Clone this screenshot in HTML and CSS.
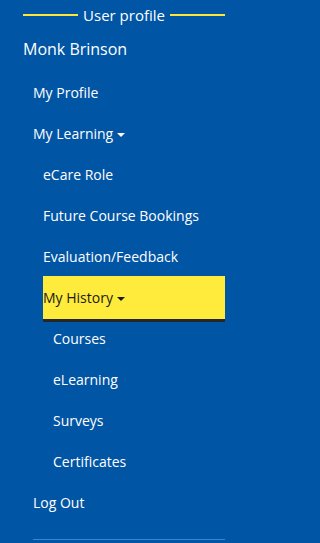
FILE: index.html
```html
<!DOCTYPE html>
<html lang="en">
<head>
<meta charset="utf-8">
<title>User profile</title>
<link rel="stylesheet" href="styles.css">
</head>
<body>
<nav class="sidebar">
  <div class="heading"><span class="rule"></span><span class="heading-text">User profile</span><span class="rule"></span></div>
  <div class="name">Monk Brinson</div>
  <ul class="menu">
    <li><a class="link">My Profile</a></li>
    <li><a class="link">My Learning<span class="caret"></span></a>
      <ul class="menu sub">
        <li><a class="link">eCare Role</a></li>
        <li><a class="link">Future Course Bookings</a></li>
        <li><a class="link">Evaluation/Feedback</a></li>
        <li><a class="link active">My History<span class="caret"></span></a>
          <ul class="menu sub">
            <li><a class="link">Courses</a></li>
            <li><a class="link">eLearning</a></li>
            <li><a class="link">Surveys</a></li>
            <li><a class="link">Certificates</a></li>
          </ul>
        </li>
      </ul>
    </li>
    <li><a class="link">Log Out</a></li>
  </ul>
  <div class="divider"></div>
</nav>
</body>
</html>
```
FILE: styles.css
```css
html, body {
  margin: 0;
  padding: 0;
  background: #0155a5;
  height: 100%;
  overflow: hidden;
}
body {
  font-family: "Open Sans", "Noto Sans", sans-serif;
  color: #ffffff;
}
.sidebar {
  width: 202px;
  padding: 0 0 0 23px;
}
.heading {
  display: flex;
  align-items: center;
  gap: 5px;
  height: 30px;
}
.rule {
  flex: 1;
  height: 2px;
  background: #ffe53a;
}
.heading-text {
  font-size: 15px;
  line-height: 20px;
}
.name {
  font-size: 16px;
  line-height: 20px;
  padding: 9px 0 13px;
}
.menu {
  list-style: none;
  margin: 0;
  padding: 0 0 0 10px;
}
.menu.sub {
  padding-left: 10px;
}
.link {
  display: block;
  font-size: 14px;
  line-height: 21px;
  padding: 10px 0;
  color: #ffffff;
}
.link.active {
  background: #ffeb3b;
  color: #1a1a1a;
  padding: 11px 0;
  margin: -1px 0 -4px;
  border-bottom: 3px solid #23272b;
}
.caret {
  display: inline-block;
  width: 0;
  height: 0;
  border-top: 4px solid currentColor;
  border-left: 4px solid transparent;
  border-right: 4px solid transparent;
  margin-left: 4px;
  vertical-align: middle;
}
.divider {
  margin: 16px 0 0 10px;
  height: 1px;
  background: #3d83d1;
}
```
